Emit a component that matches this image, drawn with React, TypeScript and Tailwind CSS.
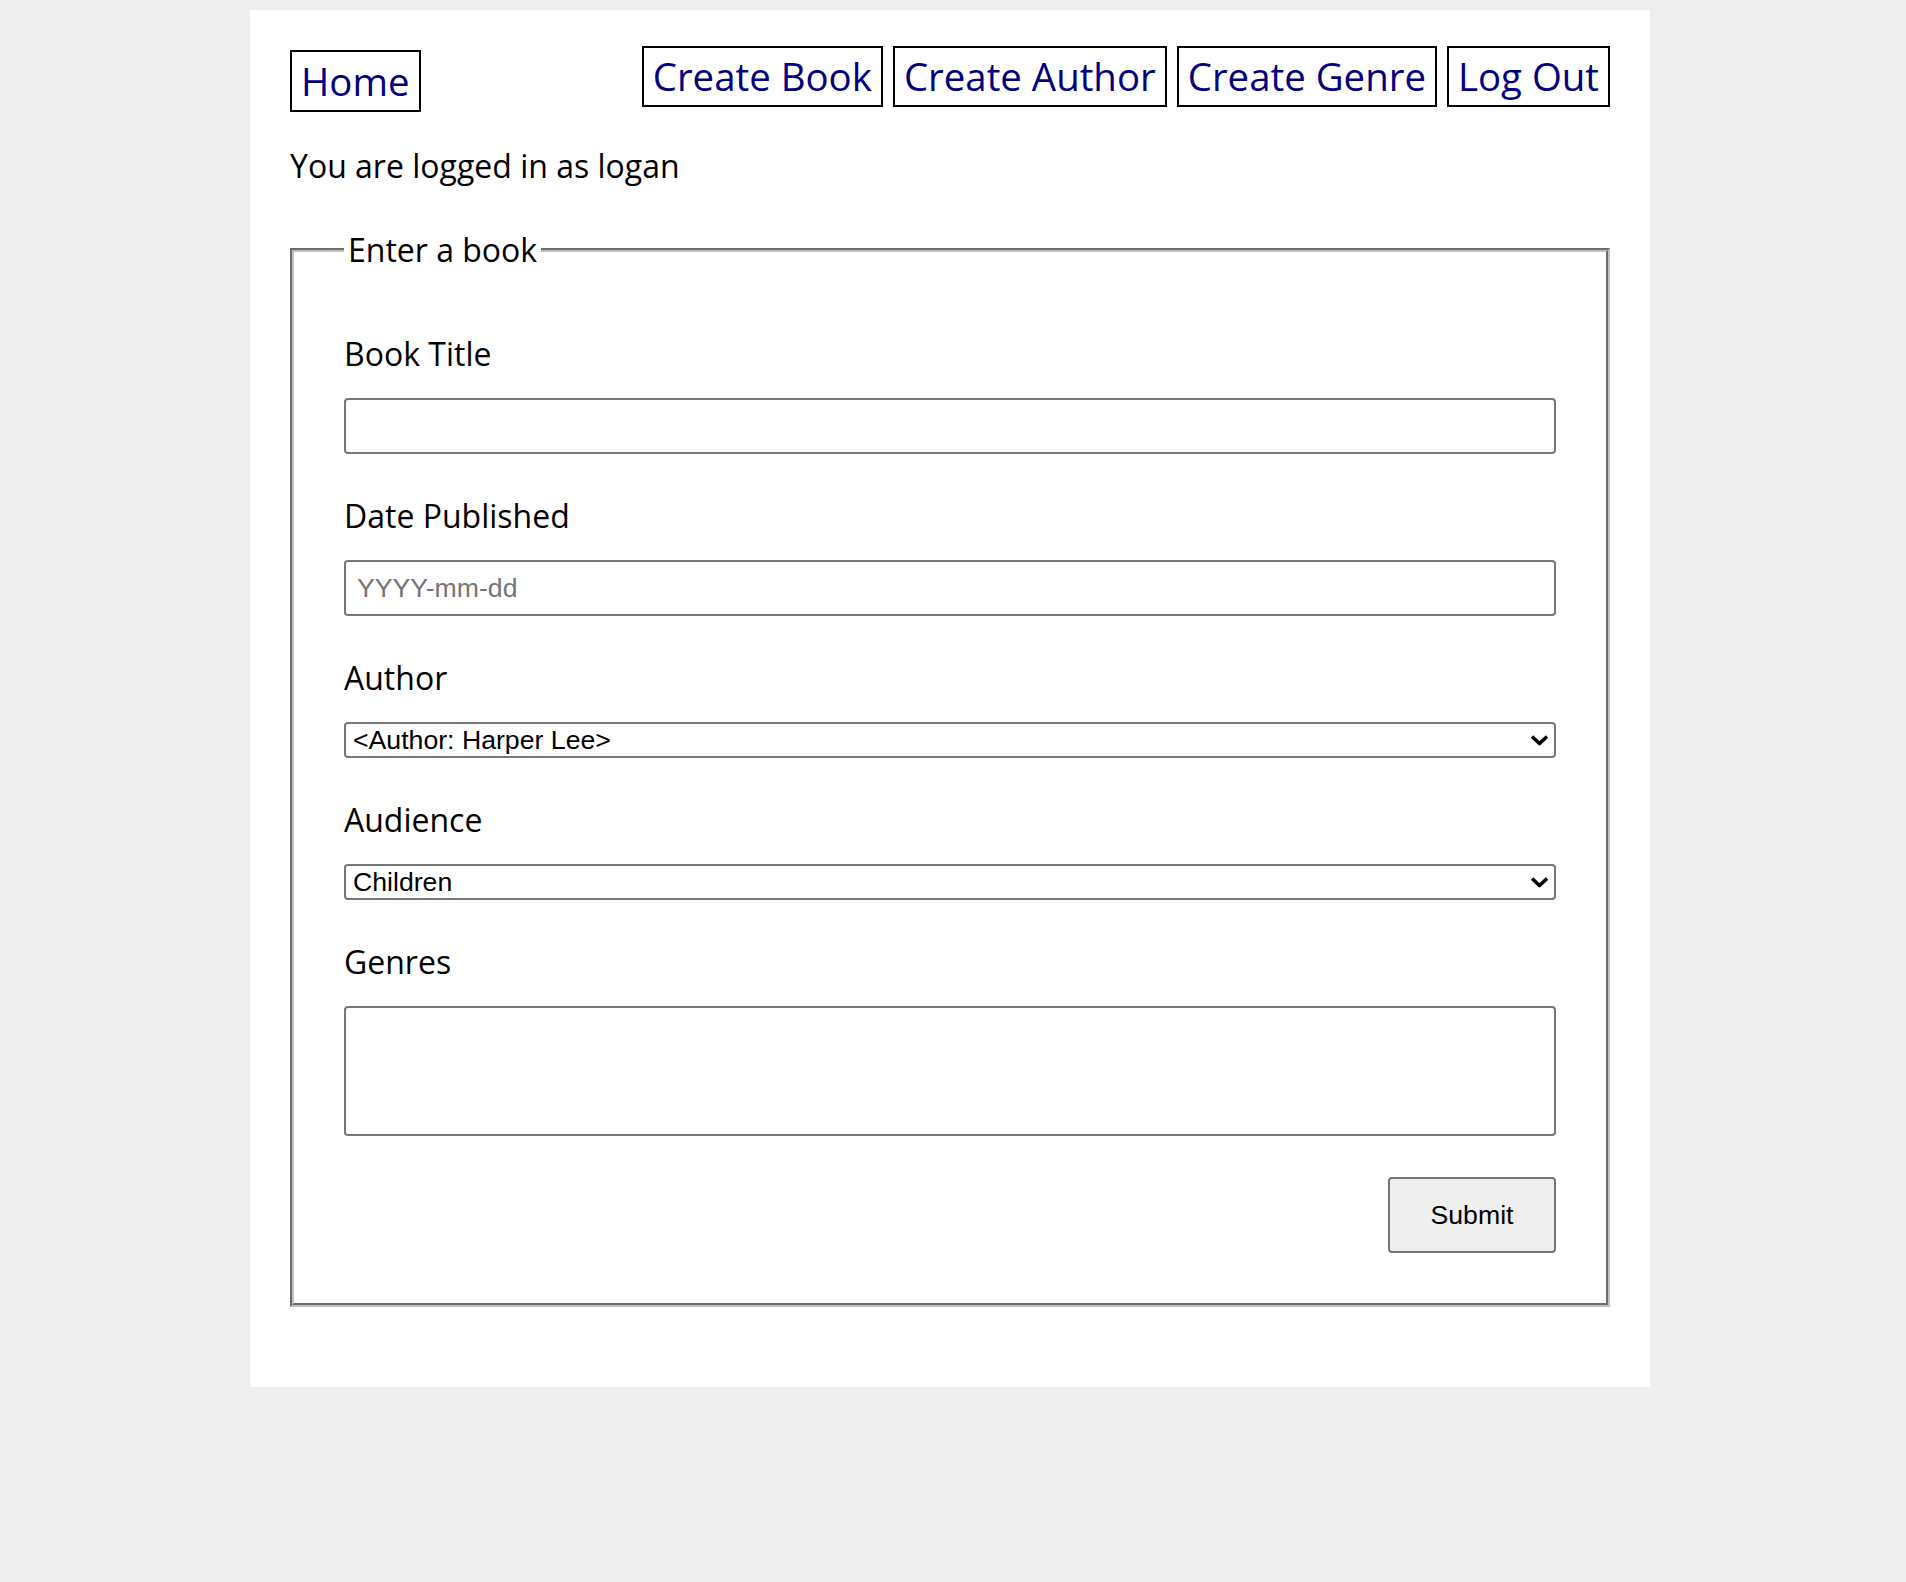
import React from 'react'

const navLinks = ['Create Book', 'Create Author', 'Create Genre', 'Log Out']

const controlFont = "font-['Liberation_Sans',Arial,sans-serif] text-[26.67px] text-black"

const Chevron = () => (
  <svg
    className="pointer-events-none absolute right-[7px] top-1/2 -translate-y-1/2"
    width="19"
    height="11"
    viewBox="0 0 19 11"
    fill="none"
  >
    <path d="M2 2L9.5 9L17 2" stroke="#000" strokeWidth="3.5" />
  </svg>
)

const Field: React.FC<{ label: string; children: React.ReactNode }> = ({ label, children }) => (
  <div>
    <label className="block text-[32px] leading-[44px] mb-[22px]">{label}</label>
    {children}
  </div>
)

const App: React.FC = () => {
  return (
    <div className="min-h-screen bg-[#eeeeee] pt-[10px] font-['Open_Sans',sans-serif] text-black">
      <div className="w-[1400px] ml-[250px] bg-white px-[40px] pt-[36px] pb-[80px]">
        {/* Header nav */}
        <div className="flex justify-between items-start">
          <a
            href="#"
            className="mt-[4px] block h-[62px] border-2 border-black px-[9px] text-[38.4px] leading-[58px] text-[#000080]"
          >
            Home
          </a>
          <div className="flex gap-[10px]">
            {navLinks.map((link) => (
              <a
                key={link}
                href="#"
                className="block h-[61px] border-2 border-black px-[9px] text-[38.4px] leading-[57px] text-[#000080]"
              >
                {link}
              </a>
            ))}
          </div>
        </div>

        <p className="mt-[32px] text-[32px] leading-[44px]">You are logged in as logan</p>

        {/* Book form */}
        <form className="mt-[40px]">
          <fieldset className="border-4 [border-style:groove] border-[#c0c0c0] px-[50px] pt-[60px] pb-[50px]">
            <legend className="px-[4px] text-[32px] leading-[44px]">Enter a book</legend>

            <div className="flex flex-col gap-[40px]">
              <Field label="Book Title">
                <input
                  type="text"
                  className={`block w-full h-[56px] border-2 border-[#767676] rounded-[4px] bg-white px-[11px] ${controlFont}`}
                />
              </Field>

              <Field label="Date Published">
                <input
                  type="text"
                  placeholder="YYYY-mm-dd"
                  className={`block w-full h-[56px] border-2 border-[#767676] rounded-[4px] bg-white px-[11px] placeholder:text-[#757575] ${controlFont}`}
                />
              </Field>

              <Field label="Author">
                <div className="relative">
                  <select
                    defaultValue="1"
                    className={`block w-full h-[36px] appearance-none border-2 border-[#767676] rounded-[4px] bg-white pl-[7px] pr-[32px] leading-[31px] ${controlFont}`}
                  >
                    <option value="1">&lt;Author: Harper Lee&gt;</option>
                  </select>
                  <Chevron />
                </div>
              </Field>

              <Field label="Audience">
                <div className="relative">
                  <select
                    defaultValue="children"
                    className={`block w-full h-[36px] appearance-none border-2 border-[#767676] rounded-[4px] bg-white pl-[7px] pr-[32px] leading-[31px] ${controlFont}`}
                  >
                    <option value="children">Children</option>
                  </select>
                  <Chevron />
                </div>
              </Field>

              <Field label="Genres">
                <select
                  multiple
                  className={`block w-full h-[130px] border-2 border-[#767676] rounded-[4px] bg-white ${controlFont}`}
                />
              </Field>
            </div>

            <div className="mt-[41px] flex justify-end">
              <button
                type="button"
                className={`h-[76px] w-[168px] bg-[#efefef] border-2 border-[#767676] rounded-[4px] ${controlFont}`}
              >
                Submit
              </button>
            </div>
          </fieldset>
        </form>
      </div>
    </div>
  )
}

export default App
